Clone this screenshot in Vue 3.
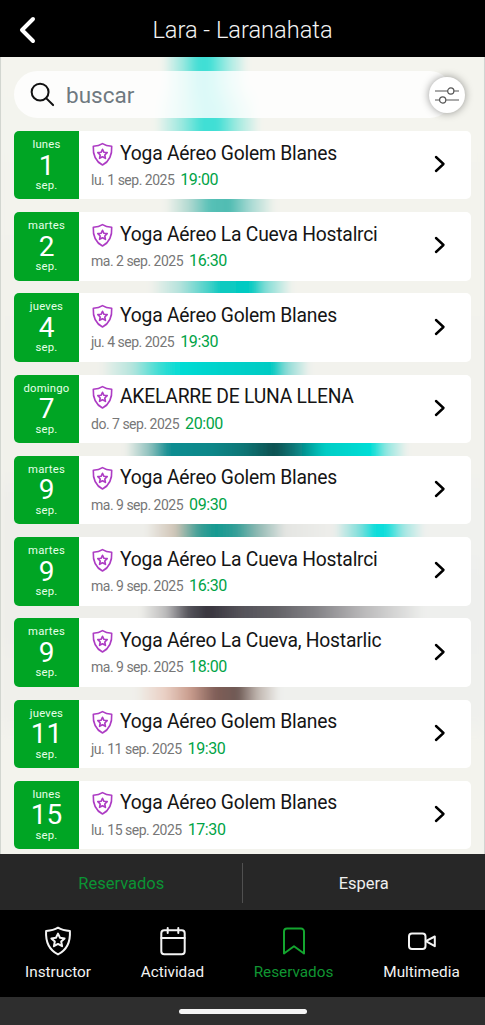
<script setup>
const STAR = 'M12 7l1.500 3.200 3.400.4-2.500 2.400.65 3.500L12 14.800l-3.050 1.700.65-3.500-2.500-2.400 3.400-.4z'
const SHIELD = 'M12 1.200c2.600 1.700 5.600 2.500 9.600 2.700.5 8.500-2 15.600-9.600 19.600C4.400 19.500 1.900 12.400 2.400 3.900 6.400 3.700 9.400 2.900 12 1.200z'

const classes = [
  { day: 'lunes', num: 1, title: 'Yoga Aéreo Golem Blanes', date: 'lu. 1 sep. 2025', time: '19:00' },
  { day: 'martes', num: 2, title: 'Yoga Aéreo La Cueva Hostalrci', date: 'ma. 2 sep. 2025', time: '16:30' },
  { day: 'jueves', num: 4, title: 'Yoga Aéreo Golem Blanes', date: 'ju. 4 sep. 2025', time: '19:30' },
  { day: 'domingo', num: 7, title: 'AKELARRE DE LUNA LLENA', date: 'do. 7 sep. 2025', time: '20:00' },
  { day: 'martes', num: 9, title: 'Yoga Aéreo Golem Blanes', date: 'ma. 9 sep. 2025', time: '09:30' },
  { day: 'martes', num: 9, title: 'Yoga Aéreo La Cueva Hostalrci', date: 'ma. 9 sep. 2025', time: '16:30' },
  { day: 'martes', num: 9, title: 'Yoga Aéreo La Cueva, Hostarlic', date: 'ma. 9 sep. 2025', time: '18:00' },
  { day: 'jueves', num: 11, title: 'Yoga Aéreo Golem Blanes', date: 'ju. 11 sep. 2025', time: '19:30' },
  { day: 'lunes', num: 15, title: 'Yoga Aéreo Golem Blanes', date: 'lu. 15 sep. 2025', time: '17:30' },
]

// Colour bands of the backdrop: top, height, then [x, colour] stops.
const bands = [
  { y: -40, h: 80, stops: [[162, '#f4f4ee'], [182, '#9ce8e0'], [198, '#3fded4'], [210, '#40e0d6'], [228, '#a4ebe3'], [248, '#f4f4ee']] },
  { y: 40, h: 65, stops: [[155, '#f3f4ee'], [182, '#98e8df'], [202, '#3edfd4'], [218, '#42dfd5'], [238, '#a4eae0'], [260, '#f4f4ee']] },
  { y: 105, h: 80, stops: [[165, '#f3f3ed'], [188, '#b4dad2'], [210, '#55c0b6'], [230, '#50bcb2'], [250, '#a6d9d2'], [275, '#f3f3ed']] },
  { y: 185, h: 81, stops: [[150, '#f2f2ec'], [180, '#b4e2dc'], [212, '#38cfc6'], [219, '#07c9c0'], [253, '#06cbc2'], [265, '#7edcd5'], [292, '#f3f3ed']] },
  { y: 266, h: 81, stops: [[100, '#f1f1eb'], [132, '#b4e4dd'], [160, '#38ddd3'], [180, '#02dcd4'], [220, '#03d2cb'], [274, '#05cbc3'], [286, '#88dad5'], [310, '#f2f2ed']] },
  { y: 347, h: 81, stops: [[125, '#f1f1eb'], [150, '#8abfbc'], [168, '#108d91'], [210, '#078789'], [245, '#087474'], [275, '#084f4f'], [295, '#087979'], [325, '#02cdc5'], [374, '#03dfd7'], [386, '#8ce6e0'], [408, '#f2f2ed']] },
  { y: 428, h: 81, stops: [[145, '#eeeeea'], [175, '#d0c4b6'], [198, '#3f9f96'], [215, '#149990'], [236, '#329e97'], [258, '#90b9b3'], [285, '#e4e5e2'], [335, '#eeeeeb'], [360, '#80dfdb'], [376, '#05ddda'], [388, '#12dedb'], [404, '#a2e6e2'], [425, '#f0f1ee']] },
  { y: 509, h: 81, stops: [[140, '#eeeeea'], [166, '#bbbabb'], [188, '#54535a'], [208, '#37343d'], [240, '#545259'], [275, '#626166'], [315, '#828185'], [365, '#bbbabb'], [425, '#eeefed']] },
  { y: 590, h: 81, stops: [[135, '#f0f0eb'], [165, '#e9cfc3'], [190, '#c99c8d'], [215, '#805e58'], [238, '#6e5954'], [258, '#c1b7b0'], [280, '#eff0ed']] },
]
const WIDTH = 485
</script>

<template>
  <div class="screen">
    <header class="topbar">
      <svg class="back" viewBox="0 0 18 28"><path d="M15 3L4 14l11 11" /></svg>
      <h1>Lara - Laranahata</h1>
    </header>

    <main class="content">
      <svg class="backdrop" viewBox="0 0 485 797" preserveAspectRatio="none">
        <defs>
          <filter id="soften" filterUnits="userSpaceOnUse" x="0" y="-40" width="485" height="837"><feGaussianBlur stdDeviation="3 10" /></filter>
          <linearGradient v-for="(b, i) in bands" :id="'band' + i" :key="i" gradientUnits="userSpaceOnUse" x1="0" x2="485">
            <stop v-for="s in b.stops" :key="s[0]" :offset="s[0] / WIDTH" :stop-color="s[1]" />
          </linearGradient>
        </defs>
        <g filter="url(#soften)">
          <rect v-for="(b, i) in bands" :key="i" x="0" :y="b.y" width="485" :height="b.h" :fill="`url(#band${i})`" />
        </g>
      </svg>

      <div class="search-row">
        <div class="search">
          <svg class="lens" viewBox="0 0 26 26"><circle cx="10.500" cy="10.500" r="8.800" /><path d="M17 17l7 7" /></svg>
          <span>buscar</span>
        </div>
        <button class="filter" aria-label="Filtros">
          <svg viewBox="0 0 24 18">
            <path d="M.5 5h12M19 5h4.500M.5 14h4M11 14h12.500" />
            <circle cx="15.800" cy="5" r="3.100" /><circle cx="7.700" cy="14" r="3.100" />
          </svg>
        </button>
      </div>

      <ul class="list">
        <li v-for="(c, i) in classes" :key="i" class="card">
          <div class="date-box">
            <span class="small">{{ c.day }}</span>
            <span class="num">{{ c.num }}</span>
            <span class="small">sep.</span>
          </div>
          <div class="info">
            <div class="title">
              <svg class="shield" viewBox="0 0 24 25"><path :d="SHIELD" /><path :d="STAR" /></svg>
              <span>{{ c.title }}</span>
            </div>
            <div class="when"><span class="date">{{ c.date }}</span><span class="time">{{ c.time }}</span></div>
          </div>
          <svg class="chevron" viewBox="0 0 12 18"><path d="M2 2l7.500 7L2 16" /></svg>
        </li>
      </ul>
    </main>

    <div class="tabs">
      <div class="tab active">Reservados</div>
      <div class="tab">Espera</div>
    </div>

    <nav class="bottom">
      <div class="item">
        <svg viewBox="0 0 30 30"><path d="M15 1.700c3 1.900 7 3 11.900 3.300C27.500 15.500 24.200 23.800 15 28.400 5.800 23.800 2.500 15.500 3.100 5 8 4.700 12 3.600 15 1.700z" /><path d="M15 7.600l2 4.200 4.600.6-3.400 3.200.9 4.600-4.100-2.300-4.100 2.300.9-4.600-3.400-3.200 4.600-.6z" /></svg>
        <span>Instructor</span>
      </div>
      <div class="item">
        <svg viewBox="0 0 30 30"><rect x="3.300" y="4.200" width="23.400" height="24" rx="3" /><path d="M3.300 12h23.400M9.700 2v5M20.300 2v5" /></svg>
        <span>Actividad</span>
      </div>
      <div class="item active">
        <svg viewBox="0 0 30 30"><path d="M5 27.500V5.500a3 3 0 0 1 3-3h14a3 3 0 0 1 3 3v22l-10-7.200z" /></svg>
        <span>Reservados</span>
      </div>
      <div class="item">
        <svg viewBox="0 0 30 30"><rect x="2" y="7.500" width="16.500" height="15.500" rx="3" /><path d="M18.800 15.200l9-4.700v9.700z" /></svg>
        <span>Multimedia</span>
      </div>
    </nav>

    <div class="system"><span class="handle"></span></div>
  </div>
</template>

<style>
body { margin: 0; }
</style>

<style scoped>
* { box-sizing: border-box; }
.screen {
  width: 485px; height: 1025px; overflow: hidden;
  display: flex; flex-direction: column;
  font-family: Roboto, sans-serif; background: #000;
}
svg { fill: none; stroke: currentColor; stroke-linecap: round; stroke-linejoin: round; }
.topbar {
  height: 57px; flex: none; display: grid; grid-template-columns: 60px 1fr 60px; align-items: center;
  color: #fff; padding-top: 3px;
}
.back { width: 18px; height: 28px; margin-left: 18px; stroke-width: 4; }
h1 { margin: 0; text-align: center; font-size: 23.600px; font-weight: 300; line-height: 30px; white-space: nowrap; color: #f4f4f4; }
.content {
  height: 797px; flex: none; overflow: hidden; position: relative; isolation: isolate;
  padding: 14px 13px 0; background: #f3f3ed; border-left: 1px solid #d2d6d0; border-right: 1px solid #d2d4d2;
}
.backdrop { position: absolute; inset: 0; width: 100%; height: 100%; z-index: -1; stroke: none; }
.search-row { display: flex; align-items: center; height: 47px; }
.search {
  width: 439px; height: 47px; border-radius: 24px; background: rgba(255, 255, 255, .82);
  display: flex; align-items: center; padding-left: 16px; color: #6f7980; font-size: 22.500px;
}
.lens { width: 25px; height: 25px; stroke: #111; stroke-width: 2.100; margin-right: 11px; }
.filter {
  width: 36px; height: 36px; margin: 1px 0 0 -24px; padding: 0; border: 0; border-radius: 50%; background: #fff;
  box-shadow: 0 0 8px rgba(0, 0, 0, .4); display: grid; place-items: center; color: #555;
}
.filter svg { width: 24px; height: 18px; stroke-width: 1.200; }
.list { list-style: none; margin: 13px 0 0; padding: 0; display: grid; gap: 12.800px; }
.card {
  width: 457px; height: 68.450px; border-radius: 5px; overflow: hidden; background: #fff;
  display: flex; align-items: center;
}
.date-box {
  width: 65px; height: 100%; flex: none; background: #00a524; color: #e6ffe8;
  display: flex; flex-direction: column; align-items: center; padding-top: 7px;
}
.small { font-size: 11.300px; line-height: 14px; letter-spacing: .2px; }
.num { font-size: 28px; line-height: 27px; color: #fff; font-weight: 400; margin-top: -.5px; margin-bottom: .5px; }
.info { flex: 1; height: 100%; padding: 9px 0 0 12px; }
.title { display: flex; align-items: center; height: 26px; font-size: 19.300px; letter-spacing: -.22px; color: #151515; white-space: nowrap; }
.shield { width: 23px; height: 25px; margin-right: 6px; color: #ad3cc4; stroke-width: 1.700; flex: none; margin-top: 2px; }
.when { display: flex; align-items: baseline; gap: 6px; height: 24px; line-height: 28px; white-space: nowrap; }
.date { font-size: 14px; letter-spacing: -.5px; color: #777; }
.time { font-size: 16px; letter-spacing: -.4px; color: #00a346; }
.chevron { width: 12px; height: 18px; margin-right: 25px; color: #000; stroke-width: 2.400; margin-top: -2px; }
.tabs { height: 56px; flex: none; display: flex; background: #272727; color: #eee; font-size: 16.500px; }
.tab { flex: 1; display: flex; align-items: center; justify-content: center; padding-top: 2px; position: relative; }
.tab.active { color: #0b9434; }
.tab + .tab::before { content: ""; position: absolute; left: -1px; top: 9px; width: 1px; height: 40px; background: #505050; }
.bottom { height: 87px; flex: none; display: grid; grid-template-columns: 116px 113px 129px 127px; color: #f4f4f4; }
.item { display: flex; flex-direction: column; align-items: center; padding-top: 16px; font-size: 15.300px; line-height: 20px; }
.item svg { width: 30px; height: 30px; margin-bottom: 6px; stroke-width: 2; }
.item.active { color: #109532; }
.item.active svg { color: #14a52f; }
.system { height: 28px; flex: none; background: #2e2e2e; display: flex; justify-content: center; align-items: center; }
.handle { width: 128px; height: 5px; border-radius: 3px; background: #f4f4f4; }
</style>
